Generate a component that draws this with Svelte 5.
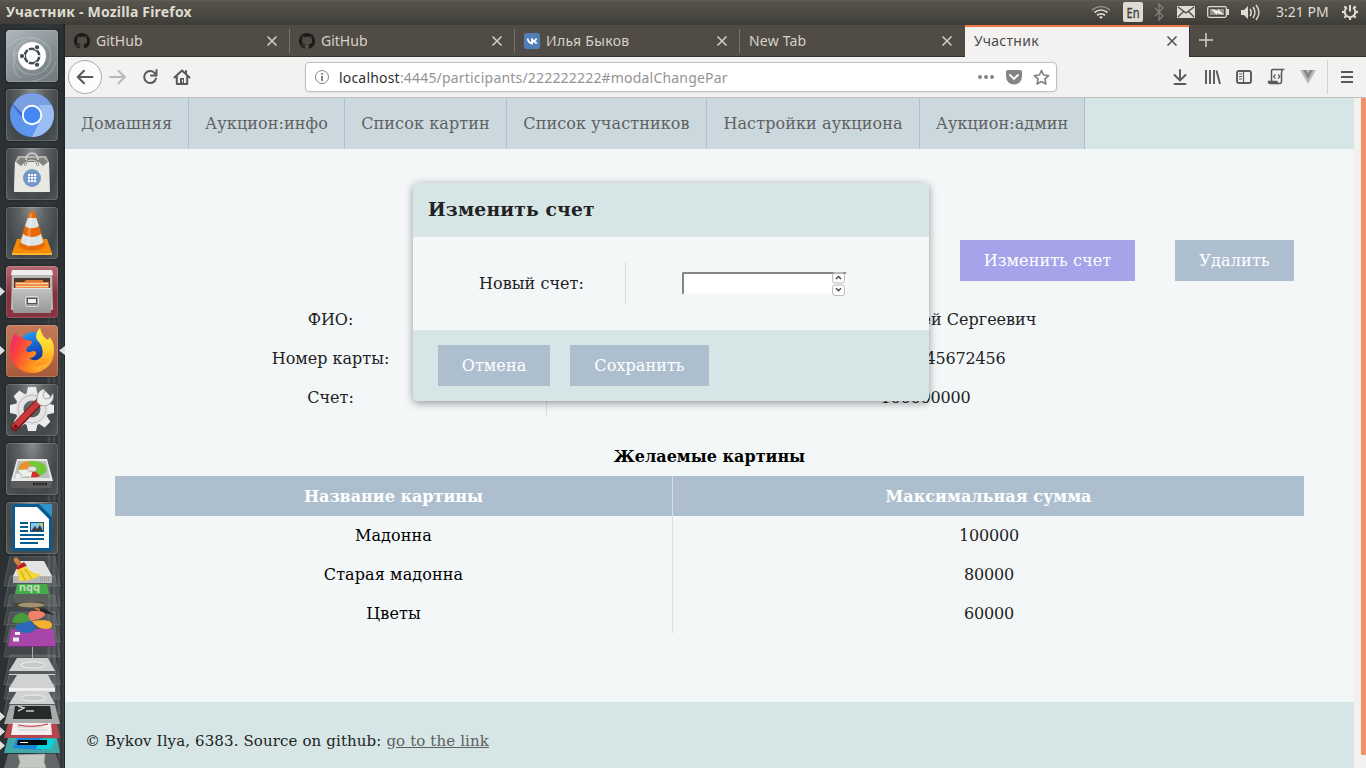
<script>
  const tabs = [
    { title: 'GitHub', icon: 'github' },
    { title: 'GitHub', icon: 'github' },
    { title: 'Илья Быков', icon: 'vk' },
    { title: 'New Tab', icon: '' }
  ];
  const nav = [
    { title: 'Домашняя', width: 124 },
    { title: 'Аукцион:инфо', width: 156 },
    { title: 'Список картин', width: 162 },
    { title: 'Список участников', width: 200 },
    { title: 'Настройки аукциона', width: 213 },
    { title: 'Аукцион:админ', width: 165 }
  ];
  const person = [
    { label: 'ФИО:', value: 'Быков Алексей Сергеевич', numeric: false },
    { label: 'Номер карты:', value: '1234123445672456', numeric: true },
    { label: 'Счет:', value: '100000000', numeric: true }
  ];
  const pictures = [
    ['Мадонна', '100000'],
    ['Старая мадонна', '80000'],
    ['Цветы', '60000']
  ];
  const launchers = ['dash', 'chromium', 'software', 'vlc', 'files', 'firefox', 'settings', 'disks', 'writer'];
  const teeth = [0, 45, 90, 135, 180, 225, 270, 315];
</script>

{#snippet cross()}
  <svg class="cross" width="12" height="12" viewBox="0 0 12 12"><path d="M1.5 1.5l9 9M10.5 1.5l-9 9" /></svg>
{/snippet}

{#snippet appIcon(name)}
  <svg width="52" height="52" viewBox="0 0 52 52">
    {#if name === 'dash'}
      <g fill="none" stroke="#c5cccf" stroke-opacity=".4" stroke-width="1.2">
        <path d="M7 26C9 8 34 2 43 18c4 9 1 17-5 22M2 17C12 5 32 4 40 15M9 20c-4 15 8 27 22 24 8-2 12-8 13-14M14 48C5 40 6 28 12 22M26 51c14-1 22-10 24-20" />
      </g>
      <circle cx="26" cy="26" r="14" fill="#fff" />
      <circle cx="26" cy="26" r="7.3" fill="none" stroke="#454b4d" stroke-width="2.6" />
      <g stroke="#fff" stroke-width="1.3"><path d="M26 26L21 17.3M26 26L21 34.7M26 26h10" /></g>
      <circle cx="26" cy="26" r="5.6" fill="#fff" />
      <g fill="#454b4d" stroke="#fff" stroke-width="1"><circle cx="16" cy="26" r="2.6" /><circle cx="31" cy="17.3" r="2.6" /><circle cx="31" cy="34.7" r="2.6" /></g>
    {:else if name === 'chromium'}
      <circle cx="26" cy="26" r="22" fill="#5d94ee" />
      <path d="M6.5 16A22 22 0 0 1 45.5 16L26 16A10 10 0 0 0 17 30z" fill="#3f69c5" />
      <path d="M7 15A22 22 0 0 1 45.5 16H26q-8 1-10 8z" fill="#7b9fe3" />
      <path d="M45.5 16A22 22 0 0 1 26 48L35 30q3-7-3-14z" fill="#9dbdf5" />
      <circle cx="26" cy="26" r="10.2" fill="#fff" /><circle cx="26" cy="26" r="8.3" fill="#4486f2" />
    {:else if name === 'software'}
      <path d="M9 14l3-6h28l3 6v30H8z" fill="#b4b4ad" />
      <path d="M9 14h34l1 30H8z" fill="#e8e8e2" />
      <path d="M10 14l4-4h24l4 4-5 4-4-4H19l-4 4z" fill="#81827b" />
      <path d="M20 12c0-9 12-9 12 0" fill="none" stroke="#c9c9c5" stroke-width="2" />
      <path d="M19 18c0-8 13-8 13 0" fill="none" stroke="#777" stroke-width="2.4" />
      <path d="M19 18c0-8 13-8 13 0" fill="none" stroke="#e8e8e8" stroke-width="1.2" />
      <circle cx="26" cy="30" r="9" fill="#7298ca" />
      <g fill="#fff">{#each [22, 25, 28] as x}{#each [26, 29, 32] as y}<rect {x} {y} width="2.2" height="2.2" />{/each}{/each}</g>
    {:else if name === 'vlc'}
      <path d="M11 32h30l5 14H6z" fill="#f48b08" /><path d="M6 46h40v2H6z" fill="#ffb52d" />
      <path d="M13 38L23.5 5q2.500-2 5 0L39 38c-1 7-25 7-26 0z" fill="#e96806" />
      <path d="M21.700 11h8.600l2.700 8c-4 3-10 3-14 0zM17 27c5 4 13 4 18 0l2.500 8c-4 5-19 5-23 0z" fill="#dce3e6" />
      <path d="M25 6l-3 34" stroke="#fff" stroke-opacity=".25" stroke-width="3" />
    {:else if name === 'files'}
      <defs><linearGradient id="drawer" x1="0" y1="0" x2="0" y2="1"><stop stop-color="#c2c2c2" /><stop offset="1" stop-color="#979797" /></linearGradient></defs>
      <path d="M6 5h40l1 39H5z" fill="#b9b9b8" /><path d="M6 4h40l1 5H5z" fill="#eee" />
      <path d="M8 12h36v12H8z" fill="#4b3930" />
      <path d="M9 16h9l2-2h17v2h6v7H9z" fill="#e27730" /><path d="M10 17.500h32M10 20.500h32" stroke="#ffd29a" stroke-width="1.3" />
      <path d="M7 22h38v25H7z" fill="url(#drawer)" /><path d="M7 22h38v1H7z" fill="#e5e5e5" />
      <rect x="19.500" y="30.500" width="13" height="10" rx="2" fill="#999" stroke="#ddd" />
      <rect x="21.500" y="32.500" width="9" height="5" fill="#eee" stroke="#555" />
    {:else if name === 'firefox'}
      <defs>
        <linearGradient id="fox" x1="0" y1="0" x2="1" y2=".5"><stop stop-color="#f0247a" /><stop offset=".35" stop-color="#fc4438" /><stop offset=".75" stop-color="#ff8a1e" /><stop offset="1" stop-color="#ffb028" /></linearGradient>
        <linearGradient id="globe" x1="0" y1="0" x2=".3" y2="1"><stop stop-color="#28a5f2" /><stop offset=".5" stop-color="#176ad6" /><stop offset="1" stop-color="#15349d" /></linearGradient>
        <linearGradient id="flame" x1="0" y1="0" x2="0" y2="1"><stop stop-color="#fff04b" /><stop offset=".55" stop-color="#ffd02c" /><stop offset="1" stop-color="#ff8c1e" /></linearGradient>
      </defs>
      <path d="M10 8Q4 15 4 27a22 21 0 0 0 44 0c0-5-2-9-5-12H15q-5 0-5-7z" fill="url(#fox)" />
      <ellipse cx="27" cy="22" rx="14" ry="15" fill="url(#globe)" />
      <path d="M10 8q1 4 5 4l5 3 6 1q0 4-5 6l-1 4q3 2 7 0 4 0 3 3-2 4-7 4 5 4 10 1 5-3 5-9l3 11-7 9H15L7 34Q2 17 10 8z" fill="url(#fox)" />
      <path d="M34 3q-6 6-3 12c4 4 7 9 5 17q-2 6-8 9 13 0 18-10c4-8 1-16-3-19q0 3-1 3-6-3-8-12z" fill="url(#flame)" />
    {:else if name === 'settings'}
      <g transform="translate(26 25)">
        {#each teeth as a}<path d="M-5.500-15l1.500-7h8L5.500-15z" fill="#ececec" transform="rotate({a})" />{/each}
        <circle r="12.500" fill="none" stroke="#e4e4e4" stroke-width="8" /><circle r="14" fill="none" stroke="#bcbcbc" stroke-width="1" />
      </g>
      <path d="M9 43L34 17" stroke="#7b1719" stroke-width="8" stroke-linecap="round" />
      <path d="M9 42L33 18" stroke="#c9383b" stroke-width="5.800" stroke-linecap="round" />
      <path d="M31 18q-1-8 4-12l4-1-2 7 2 3 5-1 3-5q2 8-5 12-5 2-8 0z" fill="#ececec" stroke="#888" stroke-width=".7" />
      <circle cx="9.500" cy="42.500" r="2" fill="#6b1113" />
    {:else if name === 'disks'}
      <path d="M10 17h31l5 20v6q0 2-3 2H8q-3 0-3-2v-6z" fill="#5b5c5b" />
      <path d="M11 16h30l6 22H5z" fill="#e8e8e6" /><path d="M12 18h28l4 17H8z" fill="#bcbebc" />
      <ellipse cx="26.500" cy="26" rx="14" ry="8" fill="#71c934" />
      <path d="M27 26L13 27q0-8 9-9z" fill="#ef8e2d" /><path d="M27 26L12.500 27q1 6 13 7z" fill="#eee" /><path d="M27 26l7 7q-4 2-9 1z" fill="#d72c2b" />
      <ellipse cx="26" cy="26" rx="4.500" ry="2.600" fill="#e3e3e3" stroke="#b0b0b0" />
      <circle cx="12" cy="33" r="2.600" fill="#eee" /><path d="M13 34l8-2" stroke="#eee" stroke-width="1.500" />
      <path d="M27 41h15" stroke="#222" stroke-width="2.500" stroke-dasharray="2 1" />
    {:else}
      <path d="M8 2h29l9 9v36q0 2-2 2H8q-2 0-2-2V4q0-2 2-2z" fill="#075b91" />
      <path d="M9 5h22l12 12v29H9z" fill="#fff" /><path d="M33 2h13v13z" fill="#3193c9" />
      <path d="M14 21h8M14 25h8M14 29h8M14 33h24M14 37h24M14 41h18" stroke="#095b8d" stroke-width="2" />
      <rect x="24.500" y="20.500" width="13" height="9" fill="#83c8e6" stroke="#095b8d" />
      <path d="M25 29l4-5 2 3 3-4 3 6z" fill="#363d40" /><circle cx="35.500" cy="22.500" r="1.500" fill="#f9c82c" />
    {/if}
  </svg>
{/snippet}

<div class="desktop">
  <header class="panel">
    <span class="window-title">Участник - Mozilla Firefox</span>
    <svg class="indicators" width="180" height="24" viewBox="1086 0 180 24">
      <g fill="none" stroke="#dfdbd2" stroke-width="1.700">
        <path d="M1092 10q9-7 18 0" stroke="#8e8c85" /><path d="M1094.500 12.500q6.500-5 13 0" /><path d="M1097 15.300q4-3 8 0" />
      </g>
      <path d="M1099 17q2-1.500 4 0l-2 2z" fill="#dfdbd2" />
      <rect x="1123" y="2" width="20" height="20" rx="2" fill="#dfdbd2" />
      <text x="1126.500" y="17.500" class="lang" textLength="13" lengthAdjust="spacingAndGlyphs">En</text>
      <path d="M1155 8l8 8-4 4V4l4 4-8 8" fill="none" stroke="#84827b" stroke-width="1.200" />
      <rect x="1177" y="6" width="18" height="12" fill="#dfdbd2" />
      <path d="M1178 7l8 6 8-6M1178 17l5.500-5.500M1194 17l-5.500-5.500" fill="none" stroke="#46443f" stroke-width="1.200" />
      <rect x="1207.700" y="6.700" width="18.600" height="10.600" rx="1.500" fill="none" stroke="#dfdbd2" stroke-width="1.300" />
      <path d="M1227 9h2v6h-2z" fill="#dfdbd2" /><path d="M1210 9h14v6h-14z" fill="#96938b" />
      <path d="M1211 9l7 2v-2l6 6-7-2v2z" fill="#f5f2ea" />
      <path d="M1241 10h3l4-4v13l-4-4h-3z" fill="#dfdbd2" />
      <path d="M1250 9q2.500 3.500 0 7M1253 7q4 5.500 0 11M1256 5q6 7.500 0 15" fill="none" stroke="#dfdbd2" stroke-width="1.500" />
    </svg>
    <span class="clock">3:21 PM</span>
    <svg class="gear" width="18" height="18" viewBox="-9 -9 18 18">
      <path d="M-3-4.500a5.300 5.300 0 1 0 6 0" fill="none" stroke="#dfdbd2" stroke-width="2" />
      <path d="M0-7v6.500" stroke="#dfdbd2" stroke-width="2" />
      {#each [45, 90, 135, 180, 225, 270, 315] as a}<path d="M0-5.500V-8" stroke="#dfdbd2" stroke-width="2.200" transform="rotate({a})" />{/each}
    </svg>
  </header>

  <aside class="launcher">
    <div class="tiles">
      {#each launchers as name}
        <div class="tile {name}">{@render appIcon(name)}</div>
      {/each}
    </div>
    <svg class="folded" width="65" height="212" viewBox="0 556 65 212">
      <g fill="#b3b7b8" fill-opacity=".14" stroke="#c4c7c7" stroke-opacity=".2">
        {#each [556, 576, 595, 612, 627, 655, 669, 684] as y}<path d="M10 {y}h45l5 30H4z" />{/each}
      </g>
      <path d="M20 561h24l8 15v7H13v-7z" fill="#e3e3e3" /><path d="M13 576h39v7H13z" fill="#b5b6b6" />
      <path d="M40 580h10M40 578h10" stroke="#888" stroke-dasharray="1 1" />
      <path d="M16 560l5 6" stroke="#cd833c" stroke-width="5" stroke-linecap="round" /><path d="M15 568l9-6 3 4-9 4z" fill="#bd1e2b" />
      <path d="M17 570l9-4q5 8 15 8-6 7-22 7z" fill="#f3d63a" /><path d="M21 571l4 9M25 569l7 10" stroke="#c89f20" />
      <path d="M17 584h30l3 14H14z" fill="#45ac4b" /><path d="M14 594h35l-1 9H16z" fill="#5c605c" /><text x="-40" y="-585" class="tiny-app" transform="rotate(180)">bbu</text>
      <path d="M11 603l32-1v6H16z" fill="#44463f" /><ellipse cx="31" cy="605" rx="13" ry="2.500" fill="#a3916f" /><path d="M34 607l11 2 10 6-11-2z" fill="#242524" />
      <path d="M40 610l-5-2" stroke="#ca783a" stroke-width="2" />
      <path d="M11 629h42l3 18H8z" fill="#a845a9" /><path d="M8 646h48v1H8z" fill="#733078" /><path d="M15 632h5v3h-5zM13 637.500h6v4h-6z" fill="#eee" />
      <path d="M31 621q-10 4-19 1 2-9 10-9 8 1 9 8z" fill="#4a9b3b" /><path d="M31 621q-6-8 1-10c16-1 19 6-1 10z" fill="#f18267" />
      <path d="M32 621c15-2 23 0 19 7-8 3-15-1-19-7z" fill="#f5b230" /><path d="M31 621c7 8 5 12-6 12-15-3-13-9 6-12z" fill="#2c6ab9" />
      <path d="M32.500 647v18" stroke="#aaa" />
      {#each [658, 675, 691] as y, i}
        <path d="M17 {y}h31l7 13v4H9v-4z" fill="#d0d2d2" /><path d="M9 {y + 13}h46v3H9z" fill={i === 1 ? '#eee' : '#555b5d'} />
        {#if i !== 1}<ellipse cx="33" cy={y + 7} rx="12" ry="3" fill="#c6c9c9" stroke="#eee" />{/if}
      {/each}
      <path d="M10 705h45l5 19H4z" fill="#a8abaa" /><path d="M15 706h35l2 13H13z" fill="#252a2a" /><path d="M18 706l6 2-6 3M26 711h8" fill="none" stroke="#ccc" stroke-width="1.500" />
      <path d="M8 724h49l3 14H4z" fill="#b5464b" /><path d="M13 723h38l1 12H11z" fill="#f3eded" /><path d="M17 727h25M19 730h28" stroke="#ccc" /><path d="M18 725q15 3 30-1" stroke="#c52d35" fill="none" />
      <path d="M8 738h49l3 15H4z" fill="#42a7a7" /><path d="M17 738h26l-2 12-28-2z" fill="#1687da" /><path d="M40 739h15l-4 10H36z" fill="#05d5d9" /><path d="M18 740h29v5H17z" fill="#050b0c" /><path d="M20 742.500h8" stroke="#fff" />
      <path d="M8 754h48l4 14H4z" fill="#626769" /><path d="M18 755l27-1-1 8 2 6H18l2-6z" fill="#c5c8c2" stroke="#a7aaa5" stroke-dasharray="2 1" />
    </svg>
    <svg class="marks" width="65" height="768" viewBox="0 0 65 768">
      <path d="M0 287l5 4.500-5 4.500zM0 346l5 4.500-5 4.500zM65 346l-6 4.500 6 4.500zM0 712l5 4.500-5 4.500zM0 727l5 4.500-5 4.500zM0 741l5 4.500-5 4.500z" fill="#dce0e0" />
    </svg>
  </aside>

  <section class="browser">
    <div class="tabs">
      {#each tabs as tab}
        <div class="tab">
          {#if tab.icon === 'github'}
            <svg class="favicon" width="16" height="16" viewBox="0 0 16 16"><path fill="#1b1b1a" d="M8 0C3.580 0 0 3.580 0 8c0 3.540 2.290 6.530 5.470 7.590.4.070.55-.17.55-.38 0-.19-.01-.82-.01-1.490-2.010.37-2.530-.49-2.690-.94-.09-.23-.48-.94-.82-1.130-.28-.15-.68-.52-.01-.53.63-.01 1.080.58 1.230.82.72 1.210 1.870.87 2.330.66.07-.52.28-.87.51-1.070-1.780-.2-3.640-.89-3.640-3.950 0-.87.31-1.590.82-2.150-.08-.2-.36-1.020.08-2.120 0 0 .67-.21 2.200.82.64-.18 1.320-.27 2-.27s1.360.09 2 .27c1.530-1.040 2.200-.82 2.200-.82.44 1.100.16 1.920.08 2.120.51.56.82 1.270.82 2.150 0 3.070-1.870 3.750-3.650 3.950.29.25.54.73.54 1.480 0 1.070-.01 1.930-.01 2.200 0 .21.15.46.55.38A8.010 8.010 0 0 0 16 8c0-4.420-3.580-8-8-8z" /></svg>
          {:else if tab.icon === 'vk'}
            <svg class="favicon" width="16" height="16" viewBox="0 0 16 16"><rect width="16" height="16" rx="2.500" fill="#507fb8" /><path d="M3.500 5.500q1.200 4.500 4.500 5V5.300M12.500 5.500Q11.500 8 8.200 8q3 .3 4.500 2.600" fill="none" stroke="#fff" stroke-width="1.800" /></svg>
          {/if}
          <span class:cyr={tab.icon === 'vk'} class:wide={tab.icon === ''}>{tab.title}</span>
          {@render cross()}
        </div>
      {/each}
      <div class="tab active"><span class="cyr">Участник</span>{@render cross()}</div>
      <svg class="plus" width="14" height="14" viewBox="0 0 14 14"><path d="M7 0v14M0 7h14" stroke="#d0ccc3" stroke-width="1.600" /></svg>
    </div>

    <div class="toolbar">
      <div class="back"><svg width="18" height="16" viewBox="0 0 18 16"><path d="M16.500 8H2M8 1.800L1.800 8 8 14.200" /></svg></div>
      <svg class="line-icon forward" width="18" height="16" viewBox="0 0 18 16"><path d="M1 8h15M9.500 1.800L15.700 8l-6.200 6.200" /></svg>
      <svg class="line-icon reload" width="16" height="16" viewBox="0 0 16 16"><path d="M13 4.500A6 6 0 1 0 14 9.500M14.500 1v5.500H9" /></svg>
      <svg class="line-icon home" width="18" height="17" viewBox="0 0 18 17"><path d="M1.500 8.500L9 1.500l7.500 7M3.800 7.500V15h10.400V7.500M13 5V2" /><path d="M7 9h4v6H7z" fill="#58595b" stroke="none" /><path d="M9.500 11v2" stroke="#fff" stroke-width="1" /></svg>
      <div class="url">
        <svg width="16" height="16" viewBox="0 0 16 16"><circle cx="8" cy="8" r="6.500" fill="none" stroke="#858585" /><path d="M8 7v5M8 4v1.800" stroke="#777" stroke-width="1.800" /></svg>
        <span class="address"><b>localhost</b>:4445/participants/222222222#modalChangePar</span>
        <svg class="dots" width="16" height="4" viewBox="0 0 16 4"><g fill="#858585"><circle cx="2" cy="2" r="2" /><circle cx="8" cy="2" r="2" /><circle cx="14" cy="2" r="2" /></g></svg>
        <svg class="pocket" width="16" height="15" viewBox="0 0 16 15"><path d="M2 0h12q2 0 2 2v4.500a8 8 0 0 1-16 0V2q0-2 2-2z" fill="#858585" /><path d="M4 5l4 4 4-4" fill="none" stroke="#fff" stroke-width="1.900" stroke-linecap="round" /></svg>
        <svg class="star" width="17" height="17" viewBox="0 0 17 17"><path d="M8.500 1.500l2.100 4.500 5 .6-3.700 3.400 1 5-4.400-2.500L4.100 15l1-5-3.700-3.400 5-.6z" fill="none" stroke="#858585" stroke-width="1.700" stroke-linejoin="round" /></svg>
      </div>
      <svg class="actions" width="155" height="40" viewBox="0 0 155 40">
        <g fill="none" stroke="#58595b" stroke-width="1.900">
          <path d="M8 13v10M2.500 18L8 23.500l5.500-5.500M2.500 27h11" stroke-linecap="round" />
          <path d="M34 13v14M38 13v14M42 13v14M44.500 13.500L48 27" />
          <rect x="65" y="14" width="14" height="12" rx="2" /><path d="M71.500 14v12M67 17h3M67 19.500h3M67 22h3" stroke-width="1.200" />
          <path d="M99.500 24V14q0-1.500 1.500-1.500h10q-1.500 1-1.500 3v9q0 2-2 2h-9q-2 0-2-2h9" stroke-width="1.500" />
          <path d="M103.500 17.500l-2 2 2 2M106 17.500l2 2-2 2" stroke-width="1.100" />
        </g>
        <path d="M96 24h9l2 3h-8q-3 0-3-3z" fill="#58595b" />
        <path d="M128 13h16l-8 14z" fill="#b9b9b9" /><path d="M131 13h3l2 3.500 2-3.500h3l-5 9z" fill="#858585" />
      </svg>
      <div class="menu"><i></i><i></i><i></i></div>
    </div>

    <div class="viewport">
      <div class="page">
        <nav>{#each nav as item}<a href="#top" style="width: {item.width}px">{item.title}</a>{/each}</nav>
        <main>
          <div class="controls"><button class="selected">Изменить счет</button><button class="remove">Удалить</button></div>
          <div class="info">
            {#each person as item}<div class="row"><div>{item.label}</div><div class:numeric={item.numeric}>{item.value}</div></div>{/each}
          </div>
          <h4>Желаемые картины</h4>
          <div class="wanted">
            <div class="row head"><div>Название картины</div><div>Максимальная сумма</div></div>
            {#each pictures as [name, sum]}<div class="row"><div>{name}</div><div class="numeric">{sum}</div></div>{/each}
          </div>
        </main>
        <footer>© Bykov Ilya, 6383. Source on github: <a href="#source">go to the link</a></footer>
      </div>
      <div class="scroll"><div class="thumb"></div></div>

      <div class="modal">
        <h3>Изменить счет</h3>
        <div class="fields">
          <div class="label">Новый счет:</div>
          <div class="value">
            <div class="number">
              <svg width="16" height="26" viewBox="0 0 16 26">
                <g fill="#fcfcfc" stroke="#bcbcbc"><rect x="1.500" y="1.500" width="12" height="10.500" rx="2.500" /><rect x="1.500" y="14" width="12" height="10.500" rx="2.500" /></g>
                <path d="M1 2.500h14" stroke="#8a8a8a" stroke-opacity=".6" />
                <path d="M5 8l2.500-2.500L10 8M5 17.200l2.500 2.500 2.500-2.500" fill="none" stroke="#444" stroke-width="1.400" />
              </svg>
            </div>
          </div>
        </div>
        <div class="modal-footer"><button>Отмена</button><button class="save">Сохранить</button></div>
      </div>
    </div>
  </section>
</div>

<style>
  :global(body) { overflow: hidden; }
  .desktop, .desktop * { box-sizing: border-box; }
  .desktop { width: 1366px; height: 768px; display: grid; grid-template: 24px 744px / 65px 1301px; font-family: "DejaVu Serif", serif; font-size: 16px; color: #222; overflow: hidden; }
  svg { display: block; flex: none; }
  .panel { grid-column: 1 / 3; display: flex; align-items: center; padding: 0 7px 1px 6px; background: linear-gradient(#605d52, #55534a 10%, #3e3d38); color: #dfdbd2; font: 14px "Noto Sans", sans-serif; white-space: nowrap; }
  .window-title { font-weight: bold; font-size: 14px; letter-spacing: .19px; flex: 1; }
  .lang { font: 14px "Noto Sans", sans-serif; fill: #3d3c38; stroke: #3d3c38; stroke-width: .3px; }
  .indicators { margin-right: 10px; margin-top: 1px; }
  .clock { width: 53px; letter-spacing: 0; }
  .gear { margin-left: 12px; }
  .launcher { position: relative; background: linear-gradient(90deg, #2b3033, #32383b 70%, #2b3032 96%, #202527); padding-top: 6px; }
  .launcher::after { content: ''; position: absolute; left: 46px; top: 220px; width: 18px; bottom: 0; background: repeating-linear-gradient(90deg, #aaa0, #aaa2 2px, #aaa4 3px, #aaa1 5px); mask-image: linear-gradient(transparent, #000 30%); z-index: 0; }
  .tiles { display: flex; flex-direction: column; gap: 7px; padding-left: 6px; position: relative; z-index: 1; }
  .tile { width: 52px; height: 52px; border-radius: 4px; background: radial-gradient(ellipse at 50% 0, #8b8e8e, #5d6163 35%, #42484a 72%, #515658); box-shadow: inset 0 0 0 1px #ffffff28, 0 0 3px #0007; }
  .dash { background: linear-gradient(145deg, #aeb8bd, #848d92 60%, #6e787d); }
  .files { background: linear-gradient(#b66a73, #81343f 55%, #87333f); }
  .firefox { background: linear-gradient(#c4795a, #a55b3c); }
  .folded { position: relative; z-index: 1; margin-top: 2px; }
  .tiny-app { font: bold 11px "Noto Sans", sans-serif; fill: #bfe0b5; }
  .marks { position: absolute; top: -24px; left: 0; z-index: 2; }
  .browser { display: flex; flex-direction: column; }
  .tabs { height: 33px; background: #504c45; border-top: 1px solid #3d3c38; display: flex; font: 14px "Noto Sans", sans-serif; color: #d6d2c9; box-shadow: inset 0 -1px #33322e; }
  .tab { width: 225px; display: flex; align-items: center; padding: 0 12px 0 9px; position: relative; }
  .tab:not(.active):not(:nth-child(4))::after { content: ''; position: absolute; right: 0; top: 4px; height: 24px; width: 1px; background: #77746b; }
  .tab span { flex: 1; font-size: 14px; padding-bottom: 2px; }
  .tab .cyr { letter-spacing: .3px; }
  .tab .wide { letter-spacing: .2px; }
  .favicon { margin-right: 6px; }
  .cross { fill: none; stroke: #d0ccc3; stroke-width: 1.600; }
  .active { background: #f3f2f1; color: #4c4c4c; border-top: 2px solid #f07746; border-right: 1px solid #33322e; width: 225px; padding-right: 11px; }
  .tab.active span, .tab.active .cross { margin-top: -2px; }
  .active .cross { stroke: #555; }
  .plus { margin: 8px 0 0 9px; }
  .toolbar { height: 41px; background: #f3f2f1; border-bottom: 1px solid #bfbfbe; display: flex; align-items: center; padding-left: 3px; }
  .back { flex: none; width: 34px; height: 34px; border: 1px solid #ababab; border-radius: 50%; background: #fcfcfc; display: grid; place-items: center; }
  .back svg, .line-icon { fill: none; stroke: #58595b; stroke-width: 2; stroke-linecap: round; stroke-linejoin: round; }
  .line-icon.forward { margin-left: 7px; stroke: #b9b9b9; }
  .reload { margin-left: 15px; }
  .home { margin-left: 15px; }
  .url { flex: none; width: 752px; height: 30px; margin-left: 114px; background: #fff; border: 1px solid #bfbfbe; border-radius: 4px; box-shadow: 0 1px 3px #0001; display: flex; align-items: center; padding: 0 6px 0 8px; font: 14px "Noto Sans", sans-serif; color: #949494; }
  .address { margin-left: 9px; flex: 1; white-space: nowrap; letter-spacing: .19px; }
  .address b { font-weight: normal; color: #303030; }
  .pocket { margin-left: 12px; }
  .star { margin-left: 11px; }
  .actions { margin-left: 115px; }
  .menu { flex: none; width: 39px; height: 34px; border-left: 1px solid #d0d0cf; display: flex; flex-direction: column; gap: 3px; justify-content: center; padding-left: 13px; }
  .menu i { width: 12px; height: 2px; background: #58595b; }
  .viewport { height: 670px; display: flex; position: relative; }
  .page { width: 1289px; background: #f3f7f8; display: flex; flex-direction: column; }
  nav { height: 51px; background: #d6e6e6; display: flex; letter-spacing: .1px; }
  nav a { color: #606060; text-decoration: none; background: #cbd9df; border-right: 1px solid #adbfcf; display: flex; align-items: center; justify-content: center; white-space: nowrap; }
  main { flex: 1; padding: 91px 50px 0; }
  .controls { display: flex; gap: 40px; justify-content: flex-end; padding-right: 10px; }
  button { border: 0; height: 41px; padding: 0; width: 112px; background: #adbfcf; color: #fff; font: 16px "DejaVu Serif", serif; letter-spacing: .08px; white-space: nowrap; }
  .selected { background: #a5a4ea; width: 175px; }
  .remove { width: 119px; letter-spacing: .2px; }
  .save { width: 139px; }
  .info { margin-top: 19px; }
  .row { display: grid; grid-template: 39px / 558px 1fr; height: 39px; line-height: 40px; text-align: center; }
  .row .numeric { letter-spacing: -.18px; padding-left: 1px; }
  .info .row .numeric { padding-left: 0; }
  .info .row { grid-template-columns: 432px 1fr; }
  .row > div:first-child { border-right: 1px solid #ddd; }
  .info .row > div:last-child:not(.numeric) { padding-right: 2px; }
  .wanted .row > div:first-child { color: #000; letter-spacing: .1px; }
  h4 { margin: 20px 0 0; height: 39px; line-height: 40px; text-align: center; font-size: 16px; color: #000; }
  .wanted .head { height: 40px; grid-template-rows: 40px; line-height: 42px; background: #adbfcf; font-weight: bold; color: #fff; letter-spacing: .04px; }
  .wanted .head > div:first-child { color: #fff; letter-spacing: 0; }
  footer { height: 66px; background: #d6e6e6; padding: 29px 20px 0; font-size: 15px; letter-spacing: .12px; line-height: 20px; }
  footer a { color: #606060; }
  .scroll { width: 12px; background: #f2f1f0; padding-left: 7px; }
  .thumb { height: 657px; background: #f19069; border-radius: 1px; }
  .modal { position: absolute; left: 348px; top: 85px; width: 516px; height: 218px; border-radius: 5px; overflow: hidden; background: #f3f7f8; box-shadow: 0 2px 8px #0006; display: flex; flex-direction: column; }
  h3 { margin: 0; height: 54px; background: #d6e6e6; border-bottom: 1px solid #e2e2e2; padding-left: 15px; line-height: 52px; font-size: 18.720px; letter-spacing: .16px; }
  .fields { height: 93px; padding: 25px 25px; display: flex; }
  .label { width: 188px; border-right: 1px solid #ddd; line-height: 44px; text-align: center; letter-spacing: .05px; }
  .value { flex: 1; display: flex; justify-content: center; padding: 10px 2px 0 0; }
  .number { width: 165px; height: 23px; background: #fff; border: 2px solid; border-color: #858585 #f9f9f9 #f9f9f9 #858585; border-radius: 2px; position: relative; }
  .number svg { position: absolute; right: -2px; top: -3px; }
  .modal-footer { height: 71px; background: #d6e6e6; border-top: 1px solid #e2e2e2; padding: 14px 25px; display: flex; gap: 20px; }
</style>
